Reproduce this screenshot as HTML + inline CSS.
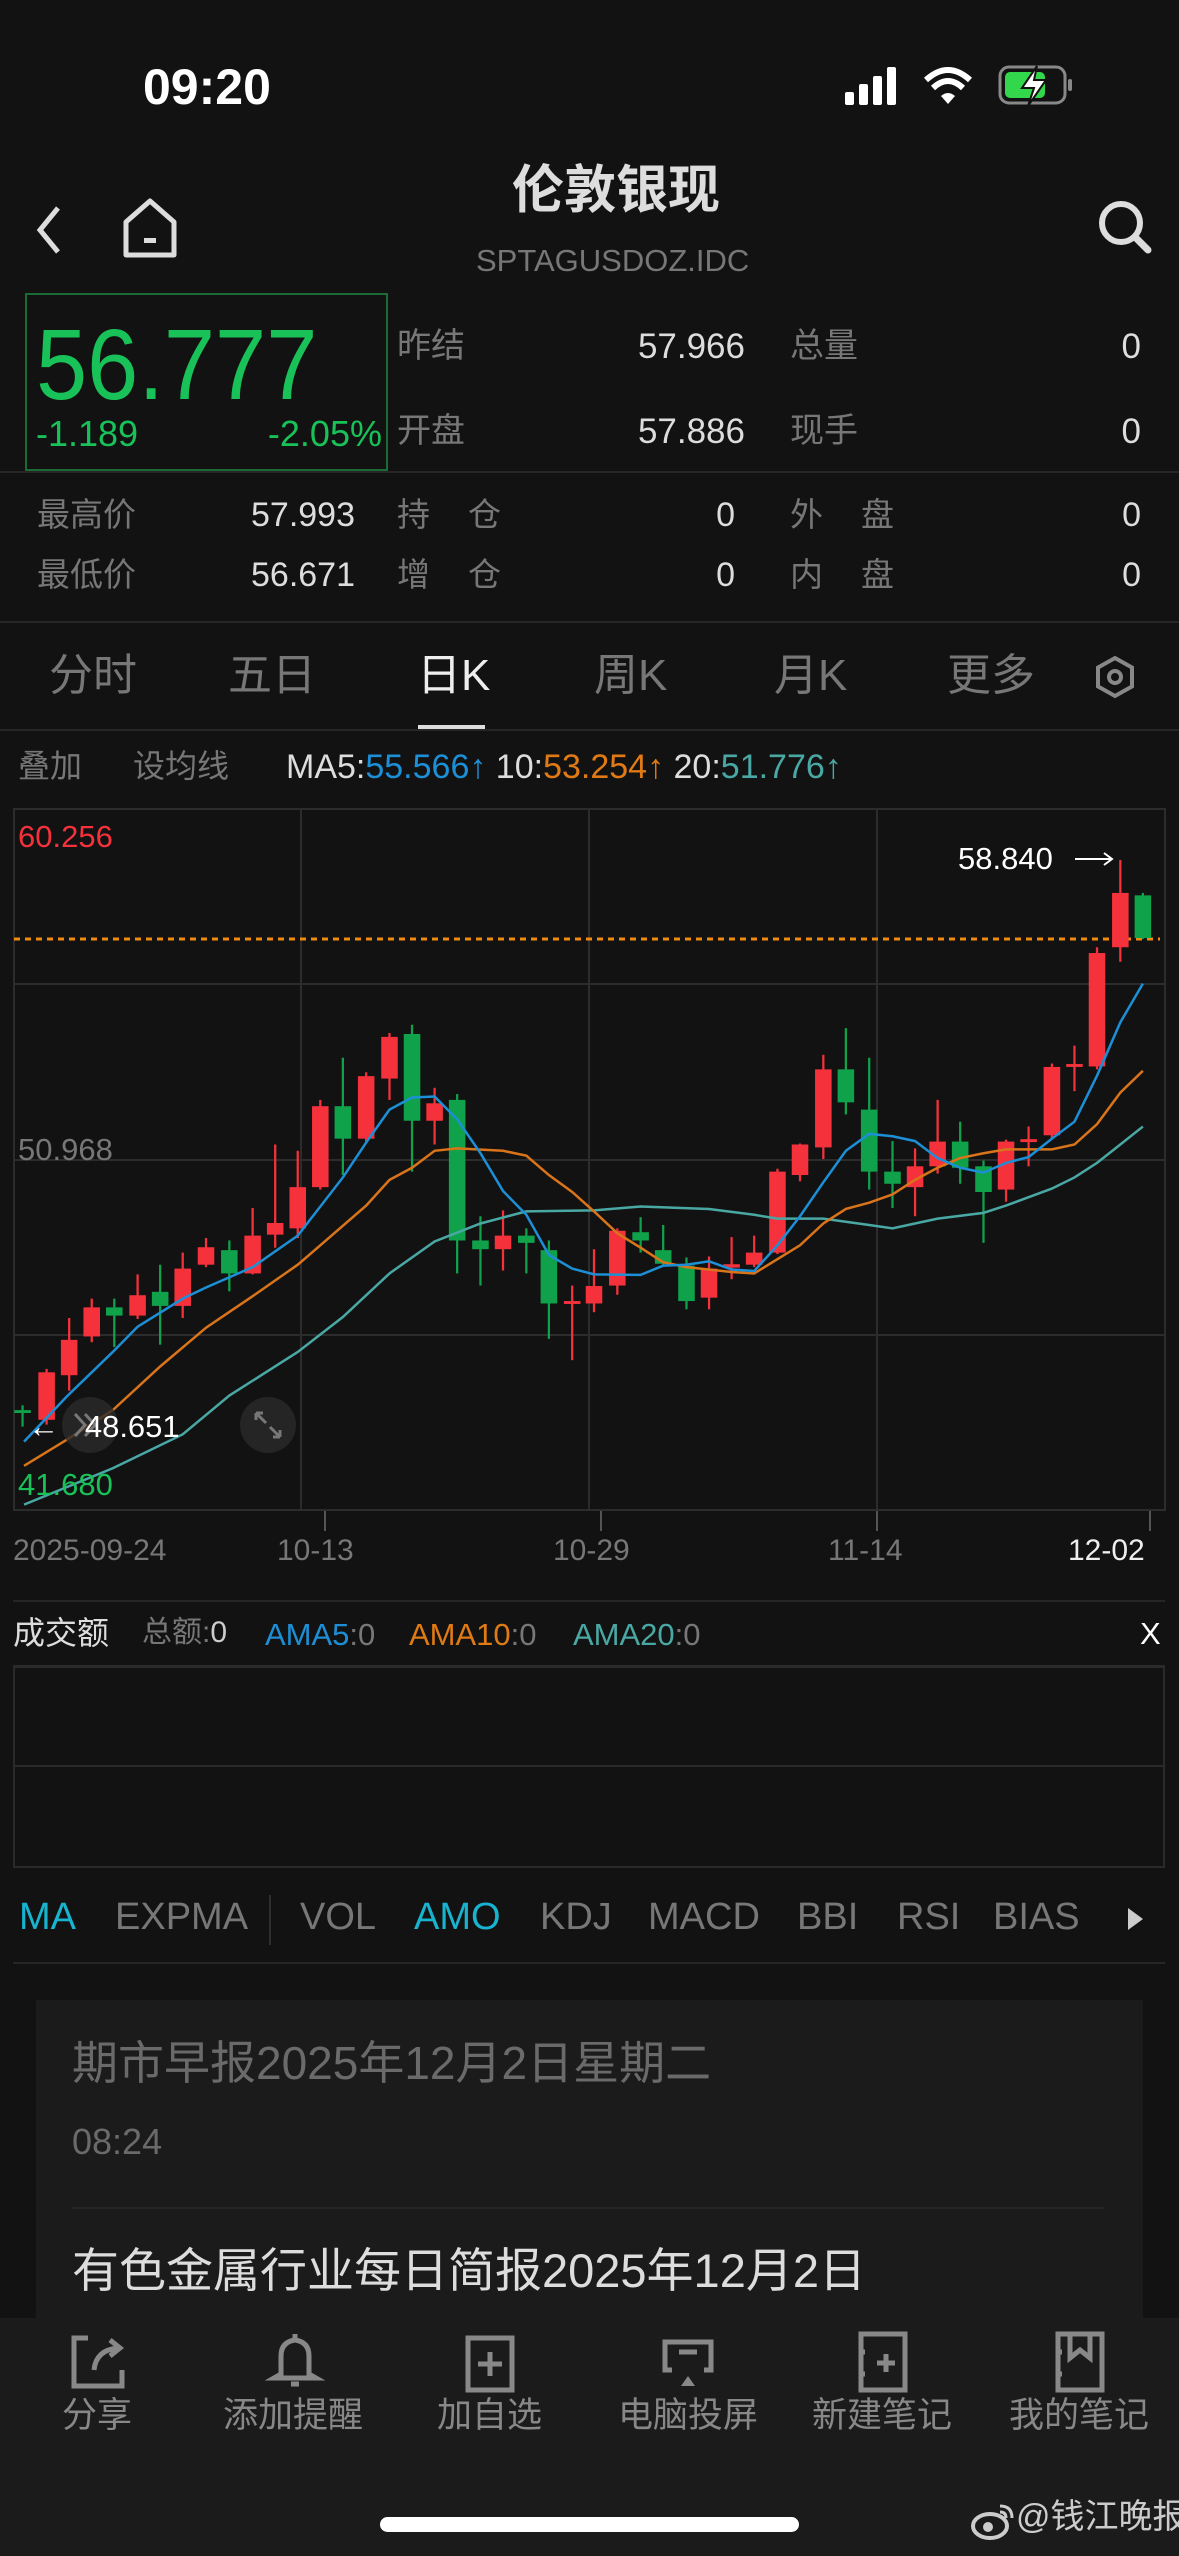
<!DOCTYPE html>
<html><head><meta charset="utf-8">
<style>
*{margin:0;padding:0;box-sizing:border-box}
body{width:1179px;height:2556px;background:#121212;position:relative;overflow:hidden;font-family:"Liberation Sans Narrow","Liberation Sans","Noto Sans CJK SC",sans-serif;color:#ddd}
.a{position:absolute;white-space:nowrap;line-height:1}
.g{color:#777}
.n{font-family:"Liberation Sans Narrow","Liberation Sans",sans-serif}
.cj{font-family:"Liberation Sans","Noto Sans CJK SC",sans-serif}
.hl{position:absolute;left:0;width:1179px;height:2px;background:#262626}
</style></head><body>
<!-- status -->
<div class="a" style="left:143px;top:62px;font-size:50px;font-weight:bold;color:#fff;font-family:'Liberation Sans',sans-serif">09:20</div>
<svg class="a" style="left:840px;top:62px" width="250" height="50" viewBox="0 0 250 50">
<rect x="5" y="30" width="9" height="13" rx="2" fill="#fff"/><rect x="19" y="22" width="9" height="21" rx="2" fill="#fff"/><rect x="33" y="14" width="9" height="29" rx="2" fill="#fff"/><rect x="47" y="5" width="9" height="38" rx="2" fill="#fff"/>
<path d="M86 18 Q108 -2 130 18" stroke="#fff" stroke-width="6" fill="none"/><path d="M93 26 Q108 12 123 26" stroke="#fff" stroke-width="6" fill="none"/><path d="M101 34 L108 42 L115 34 Q108 28 101 34Z" fill="#fff"/>
<rect x="160" y="5" width="65" height="36" rx="9" fill="none" stroke="#888" stroke-width="3"/><rect x="165" y="10" width="40" height="26" rx="5" fill="#32d74b"/><rect x="228" y="17" width="4" height="12" rx="2" fill="#888"/>
<path d="M197 4 L182 26 L194 26 L188 44 L206 18 L194 18 Z" fill="#fff" stroke="#121212" stroke-width="2"/>
</svg>
<!-- header -->
<svg class="a" style="left:28px;top:205px" width="40" height="50"><path d="M30 3 L12 25 L30 47" stroke="#ddd" stroke-width="5" fill="none"/></svg>
<svg class="a" style="left:120px;top:198px" width="60" height="60"><path d="M6 57 L6 24 L30 3 L54 24 L54 57 Z" stroke="#ddd" stroke-width="5" fill="none" stroke-linejoin="round"/><rect x="24" y="40" width="12" height="5" fill="#ddd"/></svg>
<div class="a cj" style="left:512px;top:165px;font-size:52px;color:#ddd;font-weight:bold">伦敦银现</div>
<div class="a n" style="left:476px;top:245px;font-size:31px;color:#777">SPTAGUSDOZ.IDC</div>
<svg class="a" style="left:1096px;top:198px" width="60" height="60"><circle cx="25" cy="25" r="19" stroke="#ddd" stroke-width="6" fill="none"/><path d="M39 39 L52 52" stroke="#ddd" stroke-width="7" stroke-linecap="round"/></svg>
<!-- price -->
<div class="a" style="left:25px;top:293px;width:363px;height:178px;border:2px solid #1b6b35"></div>
<div class="a n" style="left:36px;top:315px;font-size:100px;color:#19c258;transform:scaleX(0.92);transform-origin:left">56.777</div>
<div class="a n" style="left:36px;top:416px;font-size:36px;color:#19c258">-1.189</div>
<div class="a n" style="right:797px;top:416px;font-size:36px;color:#19c258">-2.05%</div>
<div class="a cj g" style="left:397px;top:329px;font-size:34px">昨结</div>
<div class="a n" style="right:434px;top:329px;font-size:35px">57.966</div>
<div class="a cj g" style="left:790px;top:329px;font-size:34px">总量</div>
<div class="a n" style="right:38px;top:329px;font-size:35px">0</div>
<div class="a cj g" style="left:397px;top:414px;font-size:34px">开盘</div>
<div class="a n" style="right:434px;top:414px;font-size:35px">57.886</div>
<div class="a cj g" style="left:790px;top:414px;font-size:34px">现手</div>
<div class="a n" style="right:38px;top:414px;font-size:35px">0</div>
<div class="hl" style="top:471px"></div>
<div class="a cj g" style="left:37px;top:498px;font-size:33px">最高价</div>
<div class="a n" style="right:824px;top:498px;font-size:34px">57.993</div>
<div class="a cj g" style="left:397px;top:498px;font-size:33px;letter-spacing:38px">持仓</div>
<div class="a n" style="right:444px;top:498px;font-size:34px">0</div>
<div class="a cj g" style="left:790px;top:498px;font-size:33px;letter-spacing:38px">外盘</div>
<div class="a n" style="right:38px;top:498px;font-size:34px">0</div>
<div class="a cj g" style="left:37px;top:558px;font-size:33px">最低价</div>
<div class="a n" style="right:824px;top:558px;font-size:34px">56.671</div>
<div class="a cj g" style="left:397px;top:558px;font-size:33px;letter-spacing:38px">增仓</div>
<div class="a n" style="right:444px;top:558px;font-size:34px">0</div>
<div class="a cj g" style="left:790px;top:558px;font-size:33px;letter-spacing:38px">内盘</div>
<div class="a n" style="right:38px;top:558px;font-size:34px">0</div>
<div class="hl" style="top:621px"></div>
<!-- tabs -->
<div class="a cj g" style="left:49px;top:654px;font-size:44px">分时</div>
<div class="a cj g" style="left:228px;top:654px;font-size:44px">五日</div>
<div class="a cj" style="left:417px;top:654px;font-size:44px;color:#eee">日K</div>
<div class="a cj g" style="left:594px;top:654px;font-size:44px">周K</div>
<div class="a cj g" style="left:774px;top:654px;font-size:44px">月K</div>
<div class="a cj g" style="left:947px;top:654px;font-size:44px">更多</div>
<svg class="a" style="left:1093px;top:655px" width="44" height="44"><path d="M22 3 L39 12.5 L39 31.5 L22 41 L5 31.5 L5 12.5 Z" stroke="#888" stroke-width="4" fill="none"/><circle cx="22" cy="22" r="6" stroke="#888" stroke-width="4" fill="none"/></svg>
<div class="a" style="left:418px;top:725px;width:67px;height:5px;background:#ddd"></div>
<div class="hl" style="top:729px"></div>
<div class="a cj g" style="left:18px;top:750px;font-size:32px">叠加</div>
<div class="a cj g" style="left:133px;top:750px;font-size:32px">设均线</div>
<div class="a n" style="left:286px;top:750px;font-size:34px;color:#ddd">MA5:<span style="color:#1d8fd6">55.566↑</span> 10:<span style="color:#e07a14">53.254↑</span> 20:<span style="color:#4aa8a4">51.776↑</span></div>
<!-- chart -->
<svg class="a" style="left:0;top:0" width="1179" height="1600">
<rect x="14" y="809" width="1151" height="701" fill="none" stroke="#2c2c2c" stroke-width="2"/>
<g stroke="#2c2c2c" stroke-width="2"><line x1="301" y1="809" x2="301" y2="1510"/><line x1="589" y1="809" x2="589" y2="1510"/><line x1="877" y1="809" x2="877" y2="1510"/>
<line x1="14" y1="984" x2="1165" y2="984"/><line x1="14" y1="1160" x2="1165" y2="1160"/><line x1="14" y1="1335" x2="1165" y2="1335"/></g>
<line x1="14" y1="939" x2="1160" y2="939" stroke="#f08a10" stroke-width="3" stroke-dasharray="6 5"/>
<g stroke="#555" stroke-width="2">
<line x1="325" y1="1511" x2="325" y2="1531"/><line x1="601" y1="1511" x2="601" y2="1531"/><line x1="877" y1="1511" x2="877" y2="1531"/><line x1="1150" y1="1511" x2="1150" y2="1531"/>
</g>
<g transform="translate(0,780) scale(0.7519,0.4847)">
<g fill="#f5323c">
<rect x="60.5" y="1215" width="3" height="115"/><rect x="51" y="1222" width="22" height="98"/>
<rect x="90.5" y="1110" width="3" height="150"/><rect x="81" y="1155" width="22" height="73"/>
<rect x="120.5" y="1070" width="3" height="90"/><rect x="111" y="1088" width="22" height="60"/>
<rect x="181.5" y="1020" width="3" height="92"/><rect x="172" y="1063" width="22" height="42"/>
<rect x="241.5" y="975" width="3" height="135"/><rect x="232" y="1008" width="22" height="77"/>
<rect x="272.5" y="945" width="3" height="60"/><rect x="263" y="964" width="22" height="36"/>
<rect x="334.5" y="883" width="3" height="137"/><rect x="325" y="940" width="22" height="78"/>
<rect x="364.5" y="752" width="3" height="213"/><rect x="355" y="914" width="22" height="24"/>
<rect x="394.5" y="765" width="3" height="180"/><rect x="385" y="840" width="22" height="85"/>
<rect x="424.5" y="660" width="3" height="185"/><rect x="415" y="673" width="22" height="167"/>
<rect x="485.5" y="603" width="3" height="145"/><rect x="476" y="611" width="22" height="129"/>
<rect x="516.5" y="522" width="3" height="138"/><rect x="507" y="530" width="22" height="86"/>
<rect x="576.5" y="635" width="3" height="117"/><rect x="567" y="667" width="22" height="36"/>
<rect x="667.5" y="888" width="3" height="124"/><rect x="658" y="940" width="22" height="28"/>
<rect x="759.5" y="1043" width="3" height="154"/><rect x="750" y="1075" width="22" height="6"/>
<rect x="788.5" y="968" width="3" height="130"/><rect x="779" y="1044" width="22" height="36"/>
<rect x="819.5" y="925" width="3" height="137"/><rect x="810" y="930" width="22" height="113"/>
<rect x="941.5" y="983" width="3" height="109"/><rect x="932" y="1008" width="22" height="60"/>
<rect x="971.5" y="943" width="3" height="87"/><rect x="962" y="999" width="22" height="7"/>
<rect x="1001.5" y="940" width="3" height="65"/><rect x="992" y="975" width="22" height="25"/>
<rect x="1032.5" y="802" width="3" height="176"/><rect x="1023" y="808" width="22" height="167"/>
<rect x="1062.5" y="750" width="3" height="78"/><rect x="1053" y="752" width="22" height="63"/>
<rect x="1093.5" y="567" width="3" height="215"/><rect x="1084" y="597" width="22" height="161"/>
<rect x="1215.5" y="760" width="3" height="140"/><rect x="1206" y="797" width="22" height="43"/>
<rect x="1245.5" y="660" width="3" height="152"/><rect x="1236" y="746" width="22" height="51"/>
<rect x="1336.5" y="742" width="3" height="128"/><rect x="1327" y="746" width="22" height="99"/>
<rect x="1366.5" y="715" width="3" height="82"/><rect x="1357" y="741" width="22" height="6"/>
<rect x="1397.5" y="585" width="3" height="155"/><rect x="1388" y="592" width="22" height="141"/>
<rect x="1427.5" y="548" width="3" height="94"/><rect x="1418" y="586" width="22" height="6"/>
<rect x="1457.5" y="345" width="3" height="252"/><rect x="1448" y="357" width="22" height="234"/>
<rect x="1488.5" y="165" width="3" height="210"/><rect x="1479" y="233" width="22" height="112"/>
</g>
<g fill="#10a24a">
<rect x="150.5" y="1070" width="3" height="100"/><rect x="141" y="1088" width="22" height="17"/>
<rect x="211.5" y="1000" width="3" height="165"/><rect x="202" y="1056" width="22" height="29"/>
<rect x="303.5" y="950" width="3" height="105"/><rect x="294" y="970" width="22" height="48"/>
<rect x="454.5" y="573" width="3" height="242"/><rect x="445" y="673" width="22" height="67"/>
<rect x="546.5" y="505" width="3" height="303"/><rect x="537" y="524" width="22" height="179"/>
<rect x="606.5" y="648" width="3" height="370"/><rect x="597" y="660" width="22" height="290"/>
<rect x="637.5" y="900" width="3" height="143"/><rect x="628" y="950" width="22" height="18"/>
<rect x="698.5" y="925" width="3" height="93"/><rect x="689" y="940" width="22" height="15"/>
<rect x="728.5" y="950" width="3" height="203"/><rect x="719" y="970" width="22" height="110"/>
<rect x="850.5" y="902" width="3" height="73"/><rect x="841" y="933" width="22" height="17"/>
<rect x="880.5" y="918" width="3" height="82"/><rect x="871" y="970" width="22" height="28"/>
<rect x="911.5" y="985" width="3" height="107"/><rect x="902" y="1002" width="22" height="73"/>
<rect x="1123.5" y="512" width="3" height="178"/><rect x="1114" y="597" width="22" height="68"/>
<rect x="1154.5" y="573" width="3" height="272"/><rect x="1145" y="680" width="22" height="128"/>
<rect x="1185.5" y="745" width="3" height="138"/><rect x="1176" y="808" width="22" height="25"/>
<rect x="1275.5" y="705" width="3" height="128"/><rect x="1266" y="746" width="22" height="54"/>
<rect x="1306.5" y="785" width="3" height="170"/><rect x="1297" y="797" width="22" height="53"/>
<rect x="1518.5" y="233" width="3" height="95"/><rect x="1509" y="238" width="22" height="88"/>
<rect x="19" y="1300" width="22" height="6"/><rect x="28.5" y="1290" width="3" height="44"/>
</g>
<g fill="none" stroke-width="2.5">
<polyline vector-effect="non-scaling-stroke" stroke="#4aa8a4" points="32,1495 150,1420 243,1350 305,1270 396,1180 456,1108 518,1018 578,952 639,915 700,890 790,888 852,880 943,885 1003,897 1034,905 1095,905 1156,918 1187,925 1247,905 1308,893 1338,878 1399,843 1429,820 1459,790 1490,752 1520,715"/>
<polyline vector-effect="non-scaling-stroke" stroke="#d9741a" points="32,1415 90,1360 150,1300 213,1210 274,1130 336,1065 396,1000 426,960 487,878 518,825 548,800 578,765 608,760 669,765 700,775 730,815 761,850 790,890 821,935 852,965 882,995 913,1005 973,1015 1003,1018 1064,960 1095,915 1125,885 1156,872 1187,855 1217,825 1247,800 1277,780 1308,770 1338,762 1399,762 1429,752 1459,710 1490,645 1520,600"/>
<polyline vector-effect="non-scaling-stroke" stroke="#1d8fd6" points="32,1365 90,1270 150,1180 183,1128 243,1070 274,1047 336,1005 396,940 456,820 487,748 518,680 548,655 578,653 608,700 639,770 669,848 700,897 730,980 761,1008 790,1020 852,1021 882,1002 913,1000 943,993 973,1010 1003,1013 1034,960 1064,900 1095,830 1125,765 1156,730 1187,735 1217,745 1247,780 1277,800 1308,810 1338,790 1368,778 1399,740 1429,705 1459,610 1490,500 1520,420"/>
</g>
</g>
<circle cx="90" cy="1425" r="28" fill="#2a2a2a" opacity="0.8"/>
<circle cx="268" cy="1425" r="28" fill="#2a2a2a" opacity="0.8"/>
<path d="M75 1414 L85 1425 L75 1436 M85 1414 L95 1425 L85 1436" stroke="#777" stroke-width="3" fill="none"/>
<path d="M256 1413 L266 1423 M256 1413 L256 1420 M256 1413 L263 1413 M280 1437 L270 1427 M280 1437 L280 1430 M280 1437 L273 1437" stroke="#777" stroke-width="3" fill="none"/>
<line x1="1075" y1="859" x2="1112" y2="859" stroke="#fff" stroke-width="2"/><path d="M1104 853 L1112 859 L1104 865" stroke="#fff" stroke-width="2" fill="none"/>
</svg>
<div class="a n" style="left:18px;top:821px;font-size:31px;color:#f5323c">60.256</div>
<div class="a n" style="left:18px;top:1134px;font-size:31px;color:#777">50.968</div>
<div class="a n" style="left:18px;top:1469px;font-size:31px;color:#19c258">41.680</div>
<div class="a n" style="left:958px;top:843px;font-size:31px;color:#fff">58.840</div>
<div class="a n" style="left:28px;top:1411px;font-size:31px;color:#fff">←&nbsp;&nbsp;&nbsp;48.651</div>
<div class="a n g" style="left:13px;top:1536px;font-size:30px">2025-09-24</div>
<div class="a n g" style="left:277px;top:1536px;font-size:30px">10-13</div>
<div class="a n g" style="left:553px;top:1536px;font-size:30px">10-29</div>
<div class="a n g" style="left:828px;top:1536px;font-size:30px">11-14</div>
<div class="a n" style="left:1068px;top:1536px;font-size:30px;color:#eee">12-02</div>
<div class="a" style="left:13px;top:1600px;width:1152px;height:2px;background:#262626"></div>
<div class="a cj" style="left:13px;top:1617px;font-size:32px;color:#ddd">成交额</div>
<div class="a cj" style="left:142px;top:1618px;font-size:30px;color:#777">总额:<span style="color:#ccc">0</span></div>
<div class="a n" style="left:265px;top:1619px;font-size:31px;color:#1d8fd6">AMA5<span style="color:#777">:0</span></div>
<div class="a n" style="left:409px;top:1619px;font-size:31px;color:#e07a14">AMA10<span style="color:#777">:0</span></div>
<div class="a n" style="left:573px;top:1619px;font-size:31px;color:#4aa8a4">AMA20<span style="color:#777">:0</span></div>
<div class="a n" style="left:1140px;top:1618px;font-size:31px;color:#fff">X</div>
<div class="a" style="left:13px;top:1665px;width:1152px;height:203px;border:2px solid #2a2a2a;border-top-width:3px"></div>
<div class="a" style="left:13px;top:1765px;width:1152px;height:2px;background:#2a2a2a"></div>
<div class="a n" style="left:19px;top:1898px;font-size:38px;color:#17b3cf">MA</div>
<div class="a n g" style="left:115px;top:1898px;font-size:38px">EXPMA</div>
<div class="a" style="left:269px;top:1895px;width:2px;height:50px;background:#2e2e2e"></div>
<div class="a n g" style="left:300px;top:1898px;font-size:38px">VOL</div>
<div class="a n" style="left:414px;top:1898px;font-size:38px;color:#17b3cf">AMO</div>
<div class="a n g" style="left:540px;top:1898px;font-size:38px">KDJ</div>
<div class="a n g" style="left:648px;top:1898px;font-size:38px">MACD</div>
<div class="a n g" style="left:797px;top:1898px;font-size:38px">BBI</div>
<div class="a n g" style="left:897px;top:1898px;font-size:38px">RSI</div>
<div class="a n g" style="left:993px;top:1898px;font-size:38px">BIAS</div>
<svg class="a" style="left:1126px;top:1906px" width="20" height="26"><path d="M2 2 L17 13 L2 24 Z" fill="#ccc"/></svg>
<div class="a" style="left:13px;top:1962px;width:1152px;height:2px;background:#262626"></div>
<!-- card -->
<div class="a" style="left:36px;top:2000px;width:1107px;height:320px;background:#1b1b1b"></div>
<div class="a cj" style="left:72px;top:2040px;font-size:46px;color:#6a6a6a">期市早报2025年12月2日星期二</div>
<div class="a n" style="left:72px;top:2124px;font-size:36px;color:#6a6a6a">08:24</div>
<div class="a" style="left:72px;top:2207px;width:1033px;height:2px;background:#252525"></div>
<div class="a cj" style="left:72px;top:2247px;font-size:47px;color:#ddd">有色金属行业每日简报2025年12月2日</div>
<!-- bottom bar -->
<div class="a" style="left:0;top:2318px;width:1179px;height:238px;background:#1b1b1b"></div>
<svg class="a" style="left:0;top:2330px" width="1179" height="64" fill="none" stroke="#888" stroke-width="5">
<path d="M88 8 L74 8 L74 56 L122 56 L122 40"/><path d="M94 40 Q96 20 118 18 M110 10 L120 18 L110 26"/>
<path d="M295 4 L295 10 M281 44 L281 26 Q281 12 295 10 Q309 12 309 26 L309 44 L316 48 L274 48 L281 44 Z M291 54 L299 54" />
<rect x="468" y="8" width="44" height="52"/><path d="M490 22 L490 46 M478 34 L502 34"/>
<path d="M672 40 L665 40 L665 12 L711 12 L711 40 L704 40"/><path d="M679 22 L697 22"/><path d="M688 46 L681 56 L695 56 Z" fill="#888" stroke="none"/>
<rect x="861" y="4" width="44" height="56"/><path d="M859 22 L865 22 M859 44 L865 44 M886 24 L886 42 M877 33 L895 33"/>
<rect x="1058" y="4" width="44" height="56"/><path d="M1056 22 L1062 22 M1056 44 L1062 44 M1070 6 L1070 28 L1080 20 L1090 28 L1090 6"/>
</svg>
<div class="a cj" style="left:62px;top:2398px;font-size:35px;color:#888">分享</div>
<div class="a cj" style="left:223px;top:2398px;font-size:35px;color:#888">添加提醒</div>
<div class="a cj" style="left:437px;top:2398px;font-size:35px;color:#888">加自选</div>
<div class="a cj" style="left:618px;top:2398px;font-size:35px;color:#888">电脑投屏</div>
<div class="a cj" style="left:812px;top:2398px;font-size:35px;color:#888">新建笔记</div>
<div class="a cj" style="left:1009px;top:2398px;font-size:35px;color:#888">我的笔记</div>
<div class="a" style="left:380px;top:2517px;width:419px;height:15px;border-radius:8px;background:#fff"></div>
<svg class="a" style="left:970px;top:2500px" width="46" height="40"><ellipse cx="20" cy="26" rx="17" ry="12" fill="none" stroke="#ccc" stroke-width="4"/><circle cx="18" cy="27" r="5" fill="#ccc"/><path d="M30 6 Q42 6 42 18 M30 12 Q36 12 36 18" stroke="#ccc" stroke-width="3" fill="none"/></svg>
<div class="a cj" style="left:1016px;top:2500px;font-size:34px;color:#ccc">@钱江晚报</div>
</body></html>
